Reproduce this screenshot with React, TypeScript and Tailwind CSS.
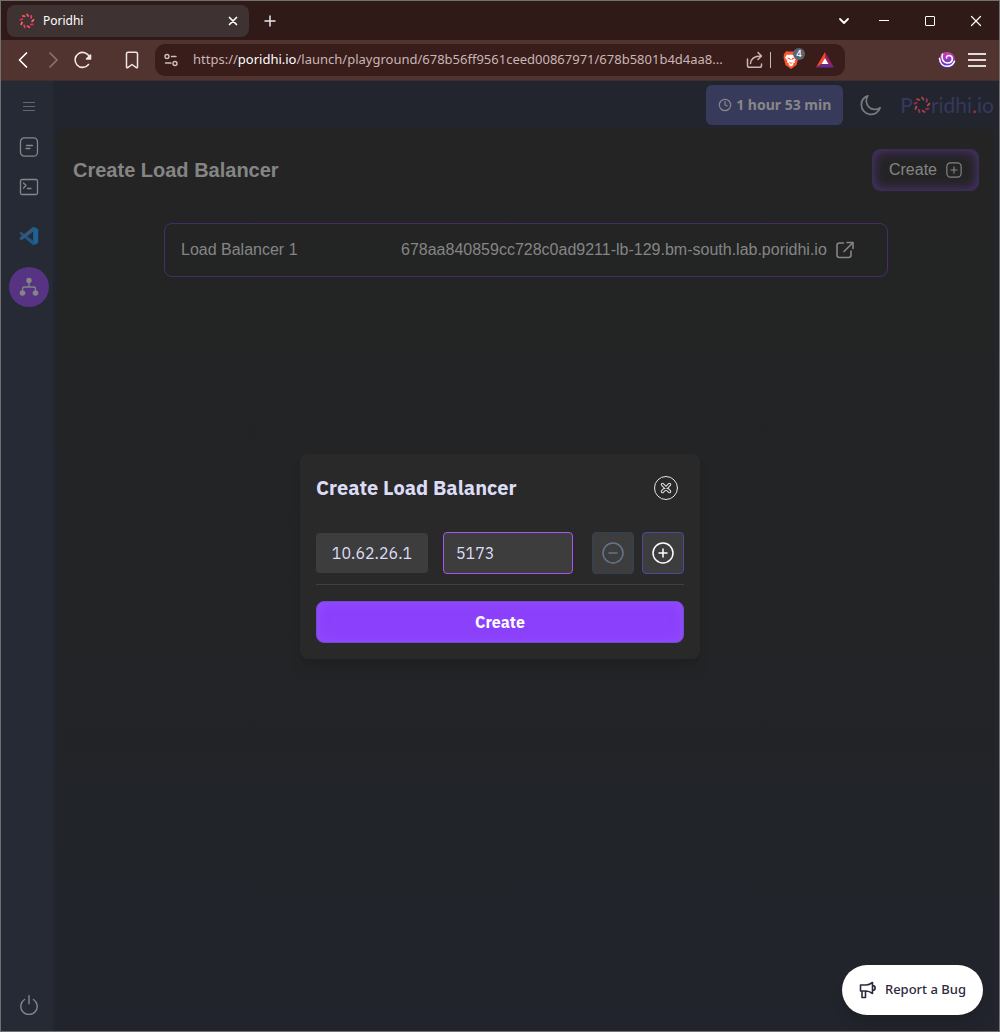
import React from "react";

type IconProps = { className?: string };

const line = {
  fill: "none",
  stroke: "currentColor",
  strokeLinecap: "round" as const,
  strokeLinejoin: "round" as const,
};

function Burst({ className, width = 2.6 }: IconProps & { width?: number }) {
  const colors = ["#fb5a4a", "#f0357c", "#f97345", "#e8257f"];
  return (
    <svg viewBox="0 0 24 24" className={className} aria-hidden="true">
      {Array.from({ length: 9 }, (_, i) => (
        <path
          key={i}
          d="M12 2 13.800 4.500"
          stroke={colors[i % 4]}
          strokeWidth={width}
          strokeLinecap="round"
          transform={`rotate(${i * 40} 12 12)`}
        />
      ))}
    </svg>
  );
}

function TabStrip() {
  return (
    <div className="flex h-[39px] items-center bg-[#301a17] pr-[13px] pl-1.5 text-white">
      <div className="flex h-8 w-[242px] items-center rounded-lg bg-[#3e3232] pr-2 pl-3">
        <Burst className="size-4" />
        <span className="ml-2 flex-1 font-['Noto_Sans','Open_Sans',sans-serif] text-xs">Poridhi</span>
        <button aria-label="Close tab" className="grid size-4 place-items-center">
          <svg viewBox="0 0 16 16" className="size-4" {...line} strokeWidth={1.7}>
            <path d="m4.500 4.500 7 7m0-7-7 7" />
          </svg>
        </button>
      </div>
      <button aria-label="New tab" className="ml-[11px] grid size-5 place-items-center text-gray-200">
        <svg viewBox="0 0 16 16" className="size-4" {...line} strokeWidth={1.5}>
          <path d="M8 3v10M3 8h10" />
        </svg>
      </button>
      <div className="ml-auto flex items-center gap-[26px]">
        <button aria-label="Search tabs" className="-mr-1.5 grid size-5 place-items-center">
          <svg viewBox="0 0 16 16" className="size-4" {...line} strokeWidth={1.8}>
            <path d="m4 6 4 4 4-4" />
          </svg>
        </button>
        <button aria-label="Minimize" className="grid size-5 place-items-center">
          <span className="h-px w-2.5 bg-white" />
        </button>
        <button aria-label="Maximize" className="grid size-5 place-items-center">
          <span className="size-2.5 rounded-[1px] border border-white" />
        </button>
        <button aria-label="Close window" className="grid size-5 place-items-center">
          <svg viewBox="0 0 16 16" className="size-4" {...line} strokeWidth={1.2}>
            <path d="m3.500 3.500 9 9m0-9-9 9" />
          </svg>
        </button>
      </div>
    </div>
  );
}

function AddressBar() {
  return (
    <div className="flex h-10 items-center bg-[#513330] pr-[13px] pl-3 text-[#efe6e5]">
      <button aria-label="Back" className="size-5">
        <svg viewBox="0 0 20 20" className="size-5" {...line} stroke="white" strokeWidth={1.7}>
          <path d="m13.500 3-7 7 7 7" />
        </svg>
      </button>
      <button aria-label="Forward" className="ml-2.5 size-5 text-[#8d7270]">
        <svg viewBox="0 0 20 20" className="size-5" {...line} strokeWidth={1.7}>
          <path d="m7 3 7 7-7 7" />
        </svg>
      </button>
      <button aria-label="Reload" className="ml-2.5 size-5">
        <svg viewBox="0 0 20 20" className="size-5" {...line} strokeWidth={1.6}>
          <path d="M15.500 14.500A7.500 7.500 0 1 1 16.500 7" />
          <path d="M17.500 5v4h-4z" fill="currentColor" />
        </svg>
      </button>
      <button aria-label="Bookmark" className="ml-[29px] size-5">
        <svg viewBox="0 0 20 20" className="size-5" {...line} strokeWidth={1.5}>
          <path d="M4.500 3.800c0-1 .6-1.600 1.600-1.600h7.800c1 0 1.600.6 1.600 1.600V17c0 .7-.7 1-1.200.6L10 14.500l-4.300 3.100c-.5.4-1.200.1-1.200-.6z" />
        </svg>
      </button>
      <div className="ml-[13px] flex h-8 w-[690px] min-w-0 items-center rounded-[10px] bg-[#381d1b] pr-2.5 pl-2">
        <button aria-label="Site information" className="size-4 text-[#d0bebd]">
          <svg viewBox="0 0 16 16" className="size-4" {...line} strokeWidth={1.4}>
            <circle cx="4" cy="4.500" r="2" />
            <path d="M8.500 4.500H13M2.500 11H8" />
            <circle cx="12" cy="11.500" r="2" />
          </svg>
        </button>
        <div className="ml-3.5 min-w-0 flex-1 truncate font-['Noto_Sans','Open_Sans',sans-serif] text-[13px] text-[#c9b6b5]">
          https://<span className="text-white">poridhi.io</span>/launch/playground/678b56ff9561ceed00867971/678b5801b4d4aa8...
        </div>
        <button aria-label="Share" className="ml-3 size-5 text-[#c9b6b5]">
          <svg viewBox="0 0 20 20" className="size-5" {...line} strokeWidth={1.5}>
            <path d="M3.500 9v6.500c0 1 .8 1.800 1.800 1.800h10.400c1 0 1.800-.8 1.800-1.800V14" />
            <path d="M6.500 13.500c.5-5 4-7.500 10.500-7.500M14 2.500 17.500 6 14 9.500" />
          </svg>
        </button>
        <span className="ml-1.5 h-4 w-px bg-[#c9b6b5]" />
        <button aria-label="Brave Shields, 4 blocked" className="relative ml-2.5 size-5">
          <svg viewBox="0 0 20 20" className="size-5">
            <path d="m5.500 1 1.500.5h6l1.500-.5 3 3.500-.5 1 .5 2-2 7.500-5.500 4-5.500-4-2-7.500.5-2-.5-1z" fill="#fb542b" />
            <path d="m6 4.500 2 .5 2-.5 2 .5 2-.5 2 3-2.500 3.500.5 1.500-2 1 .2 1.500-2.200 1.500-2.200-1.500.2-1.500-2-1 .5-1.500L4 7.500z" fill="#fff" />
            <path d="m6.500 8 2.500.8v1.200M13.500 8l-2.500.8v1.200M8.500 12.500l1.500.8 1.500-.8" stroke="#fb542b" fill="none" />
          </svg>
          <span className="absolute -top-0.5 left-3 grid size-3 place-items-center rounded-full bg-[#5d6372] font-['Inter',sans-serif] text-[9px] leading-3 font-medium text-white">4</span>
        </button>
        <button aria-label="Brave Rewards" className="ml-3.5 size-5">
          <svg viewBox="0 0 20 20" className="size-5">
            <path d="M10 2 1 17.500 6.500 14 10 8z" fill="#ff4724" />
            <path d="M10 2v6l3.500 6 5.500 3.500z" fill="#9e1f63" />
            <path d="M1 17.500h18L13.500 14h-7z" fill="#662d91" />
            <path d="m10 8 3.500 6h-7z" fill="#fff" />
          </svg>
        </button>
      </div>
      <div className="ml-auto flex items-center gap-3 pl-3">
        <button aria-label="Extension" className="size-[18px]">
          <svg viewBox="0 0 18 18" className="size-[18px]">
            <defs>
              <linearGradient id="swirl" x1="0" y1="0" x2="0" y2="1">
                <stop offset="0" stopColor="#d83cae" />
                <stop offset="1" stopColor="#4636d2" />
              </linearGradient>
            </defs>
            <circle cx="9" cy="9" r="8" fill="url(#swirl)" />
            <path d="M4.500 3C3 7 5 12 9.500 12c3 0 4.800-1.800 4.800-4.200C14.300 5.500 12.800 4.500 11 4.500S8.300 5.500 8.500 7" fill="none" stroke="#fff" strokeWidth="1.600" strokeLinecap="round" />
            <path d="M1.500 7.500C2 12 5 15.300 9 15.300c3.500 0 6.300-2 7.500-5" fill="none" stroke="#fff" strokeWidth="1.600" strokeLinecap="round" />
          </svg>
        </button>
        <button aria-label="Browser menu" className="flex w-[18px] flex-col gap-1">
          <span className="h-0.5 bg-[#e5dada]" />
          <span className="h-0.5 bg-[#e5dada]" />
          <span className="h-0.5 bg-[#e5dada]" />
        </button>
      </div>
    </div>
  );
}

function Sidebar() {
  return (
    <nav aria-label="Tools" className="flex w-[52px] shrink-0 flex-col items-center bg-[#262a34] pl-1 text-[#85878a]">
      <button aria-label="Toggle menu" className="mt-4 flex h-[18px] w-3 flex-col justify-center gap-[3px] text-[#65676b]">
        <span className="h-px bg-current" />
        <span className="h-px bg-current" />
        <span className="h-px bg-current" />
      </button>
      <button aria-label="Notes" className="mt-[22px] size-5">
        <svg viewBox="0 0 20 20" className="size-5" {...line} strokeWidth={1.3}>
          <rect x="1.500" y="0.800" width="17" height="18.400" rx="4" />
          <path d="M7.500 8.500h6M7 11.500h4" />
        </svg>
      </button>
      <button aria-label="Terminal" className="mt-5 size-5">
        <svg viewBox="0 0 20 20" className="size-5" {...line} strokeWidth={1.3}>
          <rect x="1.500" y="2.500" width="17" height="15" rx="1.500" />
          <path d="m4.500 6 2.500 2.500L4.500 11M8.500 11.500H12" />
        </svg>
      </button>
      <button aria-label="VS Code" className="mt-[29px] size-5">
        <svg viewBox="0 0 24 24" className="size-5">
          <path d="M1 8 2.500 7 17 17.500V23L.8 9.300z" fill="#1d5785" />
          <path d="m17 1 .5 5.500L3 17l-2.200-1.500V14z" fill="#33587a" />
          <path d="m17 1 6 2.600v16.800L17 23z" fill="#1c6392" />
        </svg>
      </button>
      <button aria-label="Load balancer" className="mt-[21px] grid size-10 place-items-center rounded-full bg-[#563383]">
        <svg viewBox="0 0 20 20" className="size-5 text-[#858585]">
          <circle cx="10" cy="3.500" r="2.700" fill="currentColor" />
          <circle cx="3.500" cy="16" r="2.800" fill="currentColor" />
          <circle cx="16.500" cy="16" r="2.800" fill="currentColor" />
          <path d="M10 5v5M3.500 14v-2c0-1.300.7-2 2-2h9c1.300 0 2 .7 2 2v2" fill="none" stroke="currentColor" strokeWidth="1.300" />
        </svg>
      </button>
      <button aria-label="Power off" className="mt-auto mb-4 size-5">
        <svg viewBox="0 0 20 20" className="size-5" {...line} strokeWidth={1.4}>
          <path d="M10 .8v8M5.500 4.500a8.200 8.200 0 1 0 9 0" />
        </svg>
      </button>
    </nav>
  );
}

function Logo() {
  return (
    <div className="flex items-center font-['Lato',sans-serif] text-[21px] leading-6 text-[#36385e]">
      P<Burst className="size-[18px] opacity-60" />ridhi<span className="text-[#a02c48]">.</span>io
    </div>
  );
}

function TopBar() {
  return (
    <header className="flex h-12 items-center justify-end pr-[5px]">
      <button className="flex h-10 items-center gap-1 rounded-md bg-[#383a5c] px-3 font-['Noto_Sans',sans-serif] text-sm font-bold text-[#878787]">
        <svg viewBox="0 0 16 16" className="size-3.5" {...line} strokeWidth={1.4}>
          <circle cx="8" cy="8" r="6.500" />
          <path d="M8 4v4l2.500 1" />
        </svg>
        1 hour 53 min
      </button>
      <button aria-label="Dark mode" className="mr-[18px] ml-[17px] size-[22px] text-[#77797c]">
        <svg viewBox="0 0 24 24" className="size-[22px]" {...line} strokeWidth={1.9}>
          <path d="M8.500 2A10.500 10.500 0 0 0 1.500 12 10.500 10.500 0 0 0 22 15 9.500 9.500 0 0 1 8.500 2z" />
        </svg>
      </button>
      <Logo />
    </header>
  );
}

function Panel() {
  return (
    <main className="mr-1 ml-1 flex-1 rounded-t-lg bg-linear-to-b from-[#242424] via-[#222425] to-[#21242c] px-4 pt-5 font-['Liberation_Sans',sans-serif] text-[#858585]">
      <div className="flex items-center justify-between">
        <h1 className="text-xl font-bold">Create Load Balancer</h1>
        <button className="flex h-[42px] items-center gap-[9px] rounded-lg border border-[#363150] px-4 shadow-[inset_0_0_12px_#563383]">
          Create
          <svg viewBox="0 0 18 18" className="size-4" {...line} strokeWidth={1.3}>
            <rect x="1" y="1" width="16" height="16" rx="4" />
            <path d="M9 5.500v7M5.500 9h7" />
          </svg>
        </button>
      </div>
      <div className="mx-[91px] mt-8 flex h-[54px] items-center rounded-lg border border-[#472d68] px-4">
        <span className="w-[220px]">Load Balancer 1</span>
        <a href="#load-balancer" className="flex items-center gap-2 whitespace-nowrap">
          678aa840859cc728c0ad9211-lb-129.bm-south.lab.poridhi.io
          <svg viewBox="0 0 20 20" className="size-5" {...line} strokeWidth={1.6}>
            <path d="M8.500 3H4.500C3 3 2 4 2 5.500v9.500C2 16.500 3 17.500 4.500 17.500h9c1.500 0 2.500-1 2.500-2.500v-4M12 2.500h6v6M18 2.500l-9 9" />
          </svg>
        </a>
      </div>
    </main>
  );
}

function Modal() {
  return (
    <div role="dialog" aria-labelledby="dialog-title" className="w-[400px] rounded-lg bg-[#292929] p-4 font-['IBM_Plex_Sans','Noto_Sans',sans-serif] text-[#dcdcf5] shadow-lg">
      <div className="flex h-9 items-center justify-between pr-1.5">
        <h2 id="dialog-title" className="text-xl font-bold">Create Load Balancer</h2>
        <button aria-label="Close" className="size-6 text-[#e5e5e5]">
          <svg viewBox="0 0 24 24" className="size-6" {...line}>
            <circle cx="12" cy="12" r="11.500" strokeWidth="1" />
            <path d="m8.500 8.500 7 7m0-7-7 7" strokeWidth="3.500" />
            <path d="m8.500 8.500 7 7m0-7-7 7" stroke="#292929" strokeWidth="1.500" />
          </svg>
        </button>
      </div>
      <form onSubmit={(event) => event.preventDefault()}>
        <div className="mt-[26px] flex items-center border-b border-[#404040] pb-2.5">
          <div className="grid h-10 w-28 place-items-center rounded bg-[#3d3d3d]">10.62.26.1</div>
          <input aria-label="Port" defaultValue="5173" className="ml-[15px] h-[42px] w-[130px] rounded border border-[#a855f7] bg-[#3d3d3d] px-3 outline-none" />
          <button type="button" aria-label="Remove port" disabled className="mr-2 ml-auto grid size-[42px] place-items-center rounded border border-[#334155] bg-[#3d3d3d] text-[#64748b]">
            <svg viewBox="0 0 24 24" className="size-6" {...line} strokeWidth={1.5}>
              <circle cx="12" cy="12" r="10" />
              <path d="M8 12h8" />
            </svg>
          </button>
          <button type="button" aria-label="Add port" className="grid size-[42px] place-items-center rounded border border-[#4a4a9c] bg-[#3d3d3d] text-white">
            <svg viewBox="0 0 24 24" className="size-6" {...line} strokeWidth={1.5}>
              <circle cx="12" cy="12" r="10" />
              <path d="M8 12h8M12 8v8" />
            </svg>
          </button>
        </div>
        <button type="submit" className="mt-4 h-[42px] w-full rounded-lg border border-[#6a50c0] bg-[#8b40fb] font-bold text-white shadow-[inset_0_0_12px_#944fff]">Create</button>
      </form>
    </div>
  );
}

export default function App() {
  return (
    <div className="relative flex min-h-screen flex-col border border-[#707070] bg-[#22252d]">
      <TabStrip />
      <AddressBar />
      <div className="flex flex-1 border-t border-[#3d302e]">
        <Sidebar />
        <div className="flex min-w-0 flex-1 flex-col">
          <TopBar />
          <Panel />
        </div>
      </div>
      <div className="absolute inset-x-0 top-20 bottom-0 grid place-items-center">
        <Modal />
      </div>
      <button className="absolute right-4 bottom-4 flex h-[50px] items-center gap-2 rounded-full bg-white px-[17px] font-['Noto_Sans',sans-serif] text-[13px] font-medium text-[#2f293d] shadow-lg">
        <svg viewBox="0 0 18 18" className="size-[18px]" {...line} strokeWidth={1.6}>
          <path d="M1.500 4H7c2.500 0 4.500-1 6.500-2.500v11C11.500 11 9.500 10 7 10H1.500zM3 10v6.500h3.500V10M13.500 4.500c3.500 0 3.500 5 0 5" />
        </svg>
        Report a Bug
      </button>
    </div>
  );
}
